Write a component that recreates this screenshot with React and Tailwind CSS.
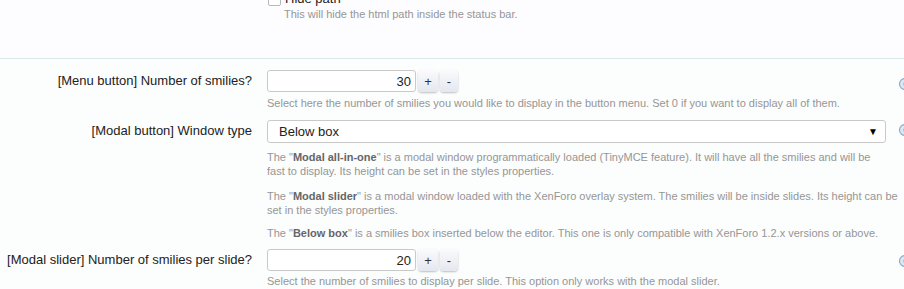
import React from "react";

const font = { fontFamily: '"Liberation Sans", Arial, sans-serif' };

function InfoIcon() {
  return (
    <div className="w-[18px] overflow-hidden">
      <svg width="14" height="14" viewBox="0 0 14 14" className="ml-[12px]">
        <circle cx="7" cy="7" r="5.5" fill="#dbe7f2" stroke="#8fadc9" strokeWidth="1.2" />
        <circle cx="7" cy="7" r="2" fill="#a9c2da" />
      </svg>
    </div>
  );
}

function Spinner({ value }) {
  return (
    <div className="flex items-center gap-[2px]">
      <input
        readOnly
        value={value}
        className="w-[149px] h-[22px] border border-[#c9c9c9] rounded-[3px] bg-white text-right pr-[4px] text-[13px] text-[#222] outline-none"
      />
      <button className="w-[20px] h-[22px] rounded-[4px] bg-gradient-to-b from-[#fbfbfd] to-[#e4e7ef] shadow-[0_1px_2px_rgba(0,0,0,0.25)] text-[13px] text-[#333] leading-none">
        +
      </button>
      <button className="w-[18px] h-[22px] rounded-[4px] bg-gradient-to-b from-[#fbfbfd] to-[#e4e7ef] shadow-[0_1px_2px_rgba(0,0,0,0.25)] text-[13px] text-[#333] leading-none">
        -
      </button>
    </div>
  );
}

function Row({ label, children, iconTop }) {
  return (
    <div className="grid grid-cols-[267px_619px_18px]">
      <div className="text-right pr-[15px] text-[13px] text-[#222] leading-[22px]">{label}</div>
      <div>{children}</div>
      <div style={{ paddingTop: iconTop }}>
        <InfoIcon />
      </div>
    </div>
  );
}

export default function App() {
  return (
    <div className="w-[904px] h-[289px] overflow-hidden bg-[#fdfcfe]" style={font}>
      <div className="h-[58px] overflow-hidden">
        <div className="grid grid-cols-[267px_619px_18px] -mt-[8px]">
          <div />
          <div>
            <div className="flex items-center gap-[4px] h-[14px]">
              <span className="w-[13px] h-[13px] border border-[#b8b8b8] rounded-[2px] bg-white ml-[1px]" />
              <span className="text-[13px] text-[#222]">Hide path</span>
            </div>
            <p className="pl-[17px] text-[11px] text-[#969696] leading-[14px] mt-[1px]">
              This will hide the html path inside the status bar.
            </p>
          </div>
          <div />
        </div>
      </div>
      <div className="h-px bg-[#dbe8e8]" />
      <div className="bg-[#fcfdfd] pt-[11px]">
        <Row label="[Menu button] Number of smilies?" iconTop={7}>
          <Spinner value="30" />
          <p className="text-[11px] text-[#969696] leading-[14px] mt-[4px]">
            Select here the number of smilies you would like to display in the button menu. Set 0 if you want to display all of them.
          </p>
        </Row>
        <div className="h-[10px]" />
        <Row label="[Modal button] Window type" iconTop={3}>
          <div className="relative h-[23px] border border-[#c9c9c9] rounded-[3px] bg-white flex items-center pl-[11px] text-[13px] text-[#222]">
            Below box
            <span className="absolute right-[7px] top-[3px] text-[10px] text-black">▼</span>
          </div>
          <div className="w-[634px] text-[11px] text-[#969696] leading-[14px] mt-[7px]">
            <p>
              The "<b className="text-[#666]">Modal all-in-one</b>" is a modal window programmatically loaded (TinyMCE feature). It will have all the smilies and will be
              <br />
              fast to display. Its height can be set in the styles properties.
            </p>
            <p className="mt-[11px]">
              The "<b className="text-[#666]">Modal slider</b>" is a modal window loaded with the XenForo overlay system. The smilies will be inside slides. Its height can be set in the styles properties.
            </p>
            <p className="mt-[9px]">
              The "<b className="text-[#666]">Below box</b>" is a smilies box inserted below the editor. This one is only compatible with XenForo 1.2.x versions or above.
            </p>
          </div>
        </Row>
        <div className="h-[9px]" />
        <Row label="[Modal slider] Number of smilies per slide?" iconTop={5}>
          <Spinner value="20" />
          <p className="text-[11px] text-[#969696] leading-[14px] mt-[3px]">
            Select the number of smilies to display per slide. This option only works with the modal slider.
          </p>
        </Row>
      </div>
    </div>
  );
}
